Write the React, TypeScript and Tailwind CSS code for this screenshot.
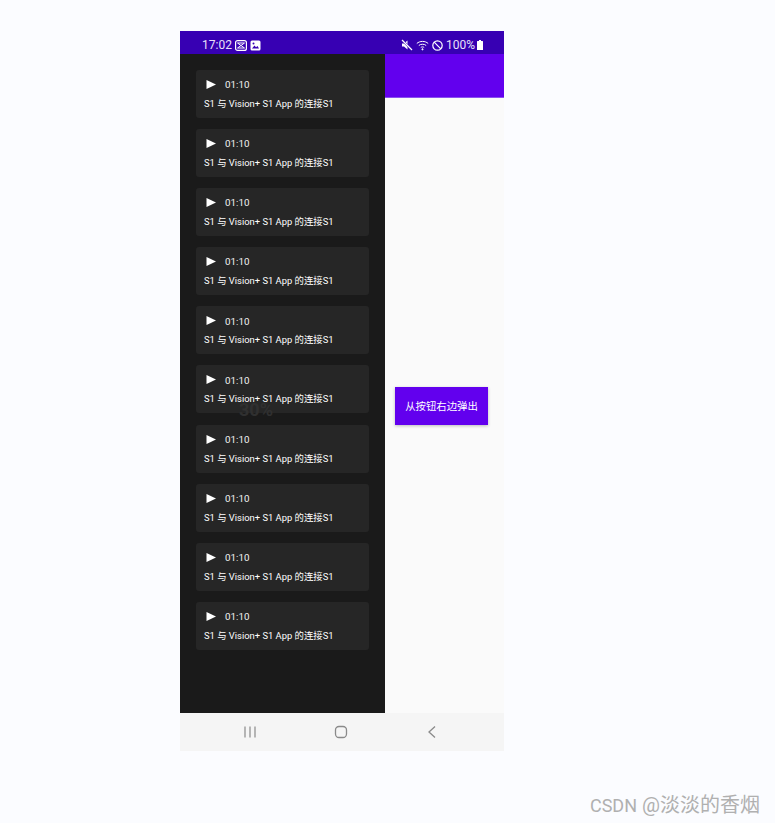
const FONT = "font-['Roboto','Noto_Sans_CJK_SC',sans-serif]"

const CARDS = Array.from({ length: 10 }, (_, i) => i)

function StatusBar() {
  return (
    <div className="h-[23px] bg-[#3700b3] flex items-center justify-between pt-[5px] pl-[22px] pr-[21px] text-white text-[12px]">
      <div className="flex items-center gap-[3px]">
        <span className="text-[#e8e0f8]">17:02</span>
        {/* notification icons */}
        <svg width="12" height="11" viewBox="0 0 12 11">
          <rect x="0.6" y="0.6" width="10.8" height="9.8" rx="2" fill="none" stroke="white" strokeWidth="1.2" />
          <path d="M2.500 3h7L6 5.500zM2.500 8l3.500-2.500L9.500 8z" fill="none" stroke="white" strokeWidth="1" />
        </svg>
        <svg width="11" height="11" viewBox="0 0 11 11">
          <rect x="0.5" y="0.5" width="10" height="10" rx="1.500" fill="white" />
          <path d="M2 8.500l2.500-3 1.500 1.800 1.500-1.300 1.500 2.500z" fill="#3700b3" />
          <circle cx="3.500" cy="3.500" r="1" fill="#3700b3" />
        </svg>
      </div>
      <div className="flex items-center gap-[3px]">
        <svg width="12" height="12" viewBox="0 0 12 12">
          <path d="M1 4.500h2L6.500 1.500v9L3 7.500H1z" fill="white" />
          <path d="M1.500 1.500l9.500 9.500" stroke="#3700b3" strokeWidth="2" />
          <path d="M1 1l10 10" stroke="white" strokeWidth="1.200" />
        </svg>
        <svg width="13" height="11" viewBox="0 0 13 11" fill="none" stroke="white" strokeWidth="1">
          <path d="M0.800 3.500c3-2.800 8.400-2.800 11.400 0" />
          <path d="M2.800 5.500c2-1.700 5.400-1.700 7.400 0" />
          <path d="M4.800 7.500c1-.8 2.400-.8 3.400 0" />
          <circle cx="6.500" cy="9.300" r="0.600" fill="white" />
        </svg>
        <svg width="11" height="11" viewBox="0 0 11 11" fill="none" stroke="white" strokeWidth="1.200">
          <circle cx="5.500" cy="5.500" r="4.700" />
          <path d="M2.200 2.200l6.600 6.600" />
        </svg>
        <span className="text-[#e8e0f8]">100%</span>
        <svg width="6" height="10" viewBox="0 0 6 10" className="-ml-[1px]">
          <path d="M2 0h2v1h1.500a.5.5 0 0 1 .5.500V10H0V1.500A.5.5 0 0 1 .5 1H2z" fill="white" />
        </svg>
      </div>
    </div>
  )
}

function VideoCard() {
  return (
    <div className="h-[48px] rounded-[3px] bg-[#262626] pl-[8px] pt-[8px]">
      <div className="flex items-center h-[14px]">
        <svg width="10" height="10" viewBox="0 0 10 10" className="ml-[2px]">
          <path d="M0.500 0L10 4.500 0.500 9z" fill="white" />
        </svg>
        <span className="ml-[9px] pt-[1px] text-[9.800px] text-[#f2f2f2]">01:10</span>
      </div>
      <p className="mt-[5px] text-[9.400px] leading-[14px] text-white whitespace-nowrap">
        S1 与 Vision+ S1 App 的连接S1
      </p>
    </div>
  )
}

function NavBar() {
  return (
    <div className="h-[38px] bg-[#f5f5f5] flex items-center pl-[63px]">
      <svg width="14" height="14" viewBox="0 0 14 14" stroke="#8a8a8a" strokeWidth="1.200" fill="none">
        <path d="M2 1.500v11M7 1.500v11M12 1.500v11" />
      </svg>
      <svg width="14" height="14" viewBox="0 0 14 14" stroke="#8a8a8a" strokeWidth="1.300" fill="none" className="ml-[77px]">
        <rect x="1.500" y="1.500" width="11" height="11" rx="3.500" />
      </svg>
      <svg width="10" height="14" viewBox="0 0 10 14" stroke="#8a8a8a" strokeWidth="1.300" fill="none" className="ml-[79px]">
        <path d="M8 1.500L2 7l6 5.500" />
      </svg>
    </div>
  )
}

export default function App() {
  return (
    <div className={`relative h-[823px] bg-[#fbfcff] pt-[31px] pl-[180px] overflow-hidden ${FONT}`}>
      <div className="w-[324px] flex flex-col">
        <StatusBar />
        <div className="flex h-[659px]">
          {/* Drawer */}
          <div className="relative w-[205px] bg-[#1a1a1a] px-[16px] pt-[16px] flex flex-col gap-[11.100px]">
            {CARDS.map(i => (
              <VideoCard key={i} />
            ))}
            <span className="absolute left-[59px] top-[342px] text-[18px] font-bold text-[#303030]">30%</span>
          </div>

          {/* Main content */}
          <div className="flex-1 flex flex-col bg-[#fafafa]">
            <div className="h-[44px] bg-[#6200ee] border-b border-[#8a4ff0]" />
            <div className="flex-1 flex items-center pl-[10px]">
              <button className="w-[93px] h-[38px] bg-[#6200ee] pt-[2px] text-white text-[10.400px] shadow-[0_1px_3px_rgba(0,0,0,0.25)]">
                从按钮右边弹出
              </button>
            </div>
          </div>
        </div>
        <NavBar />
      </div>

      {/* Watermark */}
      <span className="absolute right-[15px] bottom-[5px] flex items-baseline gap-[5px] leading-[24px] text-[#b0b0b0] whitespace-nowrap">
        <span className="text-[18px]">CSDN</span>
        <span className="text-[20px]">@淡淡的香烟</span>
      </span>
    </div>
  )
}
